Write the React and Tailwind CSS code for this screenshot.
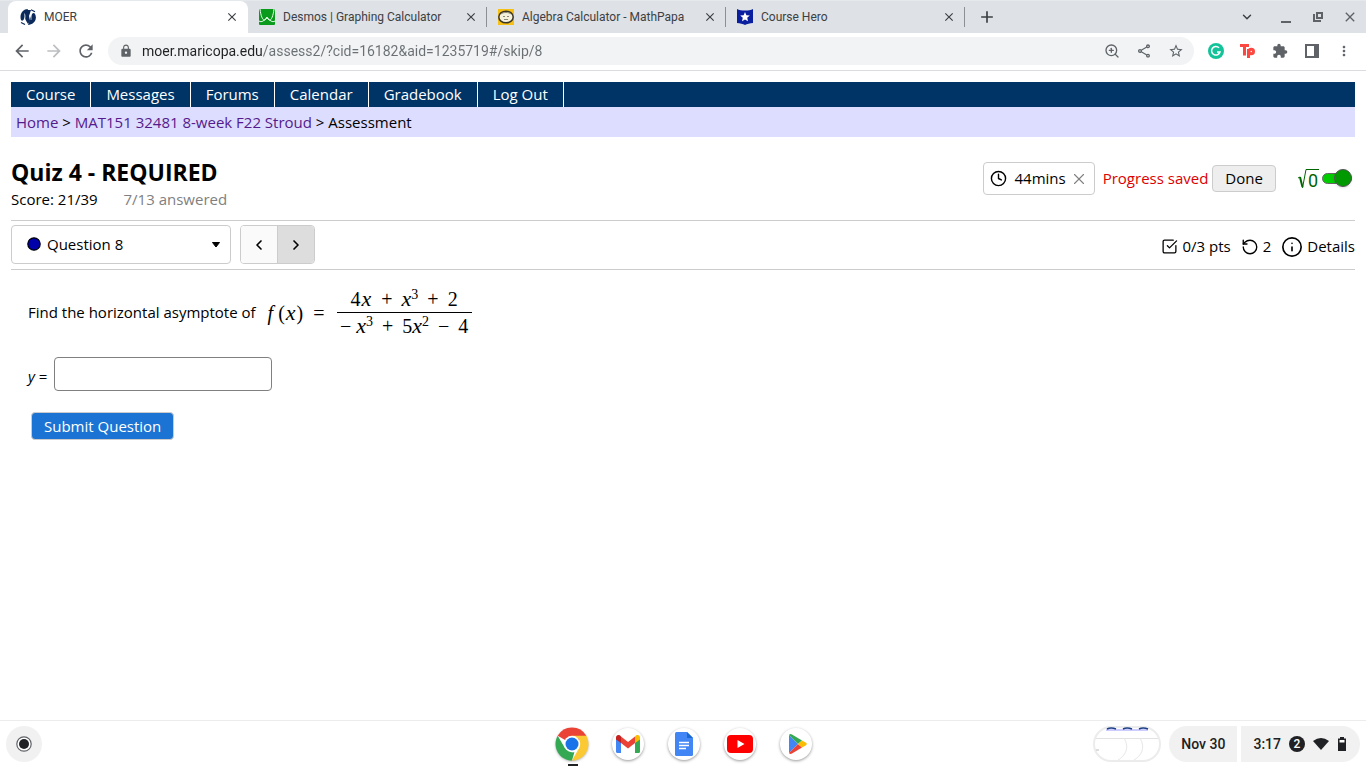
import React, { useState } from "react";
import {
  MdAdd,
  MdArrowBack,
  MdArrowForward,
  MdClose,
  MdExtension,
  MdLock,
  MdMoreVert,
  MdOutlineShare,
  MdRefresh,
  MdStarBorder,
} from "react-icons/md";
import {
  ChevronDown,
  ChevronLeft,
  ChevronRight,
  Clock,
  Info,
  RotateCcw,
  SquareCheckBig,
  X,
  ZoomIn,
} from "lucide-react";

function MoerIcon() {
  return (
    <svg viewBox="0 0 16 16" className="h-4 w-4">
      <path d="M1 11C-1 5 3 0 8 0L4 10c-1 2-2 2-3 1z" fill="#0b2a5b" />
      <path d="M6 1h5L9 7l1 5-2 3-3-5z" fill="#0b2a5b" />
      <path d="M15 5c3 6-2 11-7 11l3-9c1-3 3-4 4-2z" fill="#0b2a5b" />
      <path d="M11 .8l4 2M1 13.500l4 2" stroke="#0b2a5b" strokeWidth="1.200" />
      <path d="M4.500 4.500l.5 7M11.500 4L11 11" stroke="#fff" strokeWidth=".6" />
    </svg>
  );
}

function DesmosIcon() {
  return (
    <svg viewBox="0 0 16 16" className="h-4 w-4">
      <rect width="16" height="16" rx="1" fill="#0a9a1c" />
      <path
        d="M1 0c1 8 3 12 5 11l2-3 2 3c2 1 4-3 5-11M0 12c3 2 5-1 8-3 3 2 5 5 8 3"
        fill="none"
        stroke="#e9ffe9"
        strokeWidth="1"
      />
    </svg>
  );
}

function MathPapaIcon() {
  return (
    <svg viewBox="0 0 16 16" className="h-4 w-4">
      <rect width="16" height="16" fill="#f5c116" />
      <ellipse cx="8" cy="8" rx="7.2" ry="5.8" fill="#f4f1dc" stroke="#3a3527" strokeWidth="1.5" />
      <path d="M3 5c2-2 8-2 10 0" stroke="#8b8775" fill="none" />
      <path d="M5 7.5h2M9 7.5h2M6 10.500h4" stroke="#8b8775" fill="none" />
    </svg>
  );
}

function CourseHeroIcon() {
  return (
    <svg viewBox="0 0 16 16" className="h-4 w-4">
      <path d="M0 0c4 2 12 2 16 0v14c-3 0-6 1-8 2-2-1-5-2-8-2z" fill="#0a1fa0" />
      <path d="M8 3l1.400 3.200 3.400.3-2.600 2.300.8 3.400-3-1.800-3 1.800.8-3.400-2.600-2.300 3.400-.3z" fill="#fff" />
    </svg>
  );
}

const tabs = [
  { title: "MOER", icon: <MoerIcon />, active: true },
  { title: "Desmos | Graphing Calculator", icon: <DesmosIcon /> },
  { title: "Algebra Calculator - MathPapa", icon: <MathPapaIcon /> },
  { title: "Course Hero", icon: <CourseHeroIcon /> },
];

function TabStrip() {
  return (
    <div className="flex h-[33px] items-stretch border-t border-[#e6e9ec] bg-[#dee1e6] pl-2 text-[#3c4043]">
      {tabs.map((tab) => (
        <div
          key={tab.title}
          className={
            tab.active
              ? "flex w-60 items-center gap-2 rounded-t-lg bg-white px-3"
              : "flex w-[239px] items-center gap-2 pl-[11px]"
          }
        >
          {tab.icon}
          <span className="flex-1 truncate text-xs">{tab.title}</span>
          <button aria-label={"Close " + tab.title} className={tab.active ? "-mr-[3px]" : ""}>
            <MdClose className="h-3.5 w-3.5" />
          </button>
          {!tab.active && <span className="h-5 w-px bg-[#8c9095]" />}
        </div>
      ))}
      <button aria-label="New tab" className="ml-3">
        <MdAdd className="h-5 w-5" />
      </button>
      <div className="ml-auto flex items-center gap-4 pr-2 text-[#5f6368]">
        <button aria-label="Search tabs" className="mr-2 text-[#3c4043]">
          <ChevronDown className="h-3.5 w-3.5" strokeWidth={2.5} />
        </button>
        <button aria-label="Minimize">
          <svg viewBox="0 0 16 16" className="h-4 w-4">
            <path d="M3 13h10" stroke="currentColor" strokeWidth="2" />
          </svg>
        </button>
        <button aria-label="Restore">
          <svg viewBox="0 0 16 16" className="h-4 w-4" fill="none" stroke="currentColor">
            <path d="M7 4h5v5H7z" strokeWidth="2" />
            <path d="M4 5v7h7" strokeWidth="2" />
          </svg>
        </button>
        <button aria-label="Close window">
          <MdClose className="h-4 w-4" />
        </button>
      </div>
    </div>
  );
}

function Toolbar() {
  const [url, setUrl] = useState(
    "moer.maricopa.edu/assess2/?cid=16182&aid=1235719#/skip/8"
  );
  return (
    <div className="flex h-[38px] items-center border-b border-[#dadce0] bg-white pr-3.5 pb-px pl-3 text-[#5f6368]">
      <button aria-label="Back">
        <MdArrowBack className="h-5 w-5" />
      </button>
      <button aria-label="Forward" className="ml-3 text-[#bcbec1]">
        <MdArrowForward className="h-5 w-5" />
      </button>
      <button aria-label="Reload" className="ml-3">
        <MdRefresh className="h-5 w-5" />
      </button>
      <div className="ml-3 flex h-7 flex-1 items-center gap-4 rounded-full bg-[#f1f3f4] pr-2.5 pl-[11px]">
        <MdLock className="h-3.5 w-3.5" />
        <input
          aria-label="Address"
          value={url}
          onChange={(e) => setUrl(e.target.value)}
          className="-ml-[7px] min-w-0 flex-1 bg-[linear-gradient(90deg,#202124_121px,#6b6f73_121px)] bg-clip-text text-sm text-transparent caret-black outline-none"
        />
        <button aria-label="Zoom">
          <ZoomIn className="h-4 w-4" />
        </button>
        <button aria-label="Share">
          <MdOutlineShare className="h-4 w-4" />
        </button>
        <button aria-label="Bookmark">
          <MdStarBorder className="h-4 w-4" />
        </button>
      </div>
      <div className="ml-3.5 flex items-center gap-4">
        <button aria-label="Grammarly">
          <svg viewBox="0 0 16 16" className="h-4 w-4">
            <circle cx="8" cy="8" r="8" fill="#15c39a" />
            <path d="M11 4.800A4.300 4.300 0 1 0 12 9H9" fill="none" stroke="#fff" strokeWidth="1.500" />
          </svg>
        </button>
        <button aria-label="Teachers Pay Teachers">
          <svg viewBox="0 0 16 16" className="h-4 w-4" fill="none" stroke="#fc4840" strokeWidth="3">
            <path d="M0 2.500h9M4.500 2.500v10M8.500 6v9M9 8.500c0-3 4.500-3 4.500 0s-4.500 3-4.500 0" />
          </svg>
        </button>
        <button aria-label="Extensions">
          <MdExtension className="h-4 w-4" />
        </button>
        <button aria-label="Side panel">
          <svg viewBox="0 0 16 16" className="h-4 w-4">
            <path d="M1 1h14v14H1zM3 3v10h7V3z" fill="currentColor" fillRule="evenodd" />
          </svg>
        </button>
        <button aria-label="Menu">
          <MdMoreVert className="h-5 w-4" />
        </button>
      </div>
    </div>
  );
}

const navItems = ["Course", "Messages", "Forums", "Calendar", "Gradebook", "Log Out"];

function CourseNav() {
  return (
    <>
      <nav className="flex h-[25px] bg-[#003366] text-white">
        {navItems.map((item) => (
          <a key={item} href="#" className="border-r border-white px-[15px] leading-[25px]">
            {item}
          </a>
        ))}
      </nav>
      <div className="h-[30px] bg-[#ddddff] px-[5px] leading-[30px]">
        <a href="#" className="text-[#551a8b]">Home</a>
        {" > "}
        <a href="#" className="text-[#551a8b]">MAT151 32481 8-week F22 Stroud</a>
        {" > Assessment"}
      </div>
    </>
  );
}

function QuizHeader() {
  const [mathOn, setMathOn] = useState(true);
  return (
    <header className="mt-5 flex items-start border-b border-[#ccc] pb-[9px]">
      <div>
        <h1 className="text-[23px] leading-[30px] font-bold">Quiz 4 - REQUIRED</h1>
        <div className="leading-6">
          Score: 21/39 <span className="ml-[22px] text-[#808080]">7/13 answered</span>
        </div>
      </div>
      <div className="mt-[5px] ml-auto flex items-center">
        <div className="flex h-[33px] items-center rounded border border-[#ccc] px-1.5">
          <Clock className="h-[17px] w-[17px]" />
          <span className="ml-2">44mins</span>
          <button aria-label="Hide timer" className="ml-1 text-[#808080]">
            <X className="h-[18px] w-[18px]" strokeWidth={1.5} />
          </button>
        </div>
        <span className="ml-2 text-[#dd0000]">Progress saved</span>
        <button className="ml-1 h-[27px] rounded border border-[#ccc] bg-[#eee] px-3 leading-[25px]">
          Done
        </button>
        <label className="ml-[22px] flex items-center gap-[3px]">
          <span className="flex items-center text-[#006600]">
            <svg viewBox="0 0 9 20" className="h-5 w-[9px]" fill="none" stroke="currentColor">
              <path d="M0 9l2-1" />
              <path d="M2 8l2.500 10" strokeWidth="2" />
              <path d="M4.500 19L8 .5h1" />
            </svg>
            <span className="h-5 border-t border-[#006600] px-px font-[Roboto,sans-serif] text-lg leading-[21px]">
              0
            </span>
          </span>
          <input
            type="checkbox"
            aria-label="Math entry"
            checked={mathOn}
            onChange={(e) => setMathOn(e.target.checked)}
            className="relative mr-[3px] h-[11px] w-[30px] appearance-none rounded-full border border-[#666] bg-[#00cc00] before:absolute before:-top-[5px] before:-right-px before:h-[18px] before:w-[18px] before:rounded-full before:border before:border-[#555] before:bg-[#009900] before:shadow"
          />
        </label>
      </div>
    </header>
  );
}

function QuestionBar() {
  return (
    <div className="flex items-center border-b border-[#ccc] pt-1 pb-[5px]">
      <div className="relative">
        <select
          aria-label="Question"
          className="h-[39px] w-[220px] appearance-none rounded border border-[#ccc] bg-white pl-[35px]"
        >
          <option>Question 8</option>
        </select>
        <svg viewBox="0 0 14 14" className="pointer-events-none absolute top-3 left-4 h-3.5 w-3.5">
          <circle cx="7" cy="7" r="6.200" fill="#0000aa" stroke="#000" strokeWidth="1.200" />
        </svg>
        <svg viewBox="0 0 10 8" className="pointer-events-none absolute top-4 right-2.5 h-2 w-2.5">
          <path d="M1.500 1.500h7L5 6z" stroke="#000" strokeLinejoin="round" />
        </svg>
      </div>
      <div className="ml-[9px] flex h-[39px] overflow-hidden rounded border border-[#ccc]">
        <button aria-label="Previous question" className="w-9 bg-[#fafafa] pl-2.5">
          <ChevronLeft className="h-4 w-4" strokeWidth={2.5} />
        </button>
        <button aria-label="Next question" className="w-[37px] border-l border-[#ccc] bg-[#ddd] pl-2.5">
          <ChevronRight className="h-4 w-4" strokeWidth={2.5} />
        </button>
      </div>
      <div className="ml-auto flex items-center pt-1">
        <SquareCheckBig className="h-[17px] w-[17px]" strokeWidth={1.8} />
        <span className="ml-1">0/3 pts</span>
        <RotateCcw className="ml-2.5 h-[18px] w-[18px]" strokeWidth={1.8} />
        <span className="ml-1">2</span>
        <button className="ml-2.5 flex items-center gap-1">
          <Info className="h-[22px] w-[22px]" strokeWidth={1.8} />
          Details
        </button>
      </div>
    </div>
  );
}

function Op({ children }) {
  return <span className="mx-1">{children}</span>;
}

function Power({ n }) {
  return (
    <>
      <i className="text-[22px]">x</i>
      <sup className="text-sm">{n}</sup>
    </>
  );
}

function Formula() {
  return (
    <span className="flex items-center font-['Liberation_Serif',serif] text-xl leading-7">
      <span>
        <i>f</i> (<i className="mx-px text-[22px]">x</i>)
      </span>
      <span className="ml-2.5">=</span>
      <span className="ml-3 flex flex-col items-center">
        <span className="border-b border-black px-3.5 leading-[26px]">
          4<i className="mx-px text-[22px]">x</i> <Op>+</Op> <Power n="3" /> <Op>+</Op> 2
        </span>
        <span className="leading-[26px]">
          − <Power n="3" /> <Op>+</Op> 5<Power n="2" /> <Op>−</Op> 4
        </span>
      </span>
    </span>
  );
}

function Question() {
  const [answer, setAnswer] = useState("");
  return (
    <form className="px-[17px] pt-4" onSubmit={(e) => e.preventDefault()}>
      <div className="flex items-center gap-3">
        <span>Find the horizontal asymptote of</span>
        <Formula />
      </div>
      <div className="mt-[18px] flex items-center gap-[7px]">
        <label htmlFor="answer" className="pt-1">
          <i>y</i> =
        </label>
        <input
          id="answer"
          type="text"
          value={answer}
          onChange={(e) => setAnswer(e.target.value)}
          className="h-[34px] w-[218px] rounded border border-[#808080] px-2"
        />
      </div>
      <button className="mt-[21px] ml-[3px] h-7 rounded border border-[#ccc] bg-[#1b73d3] px-3 leading-[26px] text-white">
        Submit Question
      </button>
    </form>
  );
}

const apps = [
  {
    name: "Chrome",
    icon: (
      <svg viewBox="0 0 34 34" className="h-[34px] w-[34px]">
        <path d="M17 17L2.700 8.800A16.500 16.500 0 0 1 31.300 8.800z" fill="#ea4335" />
        <path d="M2.700 8.800l7.200 12.300 7.100 4.100 2.400.1L17 33.500A16.500 16.500 0 0 1 2.700 8.800z" fill="#34a853" />
        <path d="M31.300 8.800A16.500 16.500 0 0 1 17 33.500l7.100-12.400V12L17 8.800z" fill="#fbc934" />
        <circle cx="17" cy="17" r="8.200" fill="#fff" />
        <circle cx="17" cy="17" r="6.500" fill="#1a73e8" />
      </svg>
    ),
  },
  {
    name: "Gmail",
    icon: (
      <svg viewBox="0 0 24 18" className="h-[18px] w-6">
        <path d="M0 2v14.500Q0 18 1.500 18H5V7z" fill="#4285f4" />
        <path d="M24 2v14.500q0 1.500-1.500 1.500H19V7z" fill="#34a853" />
        <path d="M5 1.500l7 5.500 7-5.500V8l-7 5.500L5 8z" fill="#ea4335" />
        <path d="M0 2.500C0 0 3-1 5 1.500V8L0 4.500z" fill="#c5221f" />
        <path d="M24 2.500C24 0 21-1 19 1.500V8l5-3.500z" fill="#fbbc04" />
      </svg>
    ),
  },
  {
    name: "Docs",
    icon: (
      <svg viewBox="0 0 18 24" className="h-6 w-[18px]">
        <path d="M1.500 0H12l6 6v16.500q0 1.500-1.500 1.500h-15Q0 24 0 22.500v-21Q0 0 1.500 0z" fill="#4285f4" />
        <path d="M12 0l6 6h-6z" fill="#1967d2" />
        <path d="M4 10.500h10M4 13.500h10M4 16.500h7" stroke="#fff" strokeWidth="1.400" />
      </svg>
    ),
  },
  {
    name: "YouTube",
    icon: (
      <svg viewBox="0 0 26 18" className="h-[18px] w-[26px]">
        <rect width="26" height="18" rx="4" fill="#ff0000" />
        <path d="M10.500 5l7 4-7 4z" fill="#fff" />
      </svg>
    ),
  },
  {
    name: "Play Store",
    icon: (
      <svg viewBox="0 0 18 20" className="ml-1 h-5 w-[18px]">
        <path d="M0 1v18l9-9z" fill="#4285f4" />
        <path d="M0 1q1-1.500 3-.5L13 6.500 9 10z" fill="#34a853" />
        <path d="M0 19q1 1.500 3 .5l10-6L9 10z" fill="#ea4335" />
        <path d="M13 6.500l4 2.300q1.500 1.200 0 2.400l-4 2.300L9 10z" fill="#fbbc04" />
      </svg>
    ),
  },
];

function Shelf() {
  return (
    <footer className="grid h-12 grid-cols-[1fr_auto_1fr] items-center border-t border-[#ececec] bg-white px-1.5 pb-0.5 text-[#202124]">
      <button
        aria-label="Launcher"
        className="flex h-9 w-9 items-center justify-center rounded-full bg-[#f1f1f1]"
      >
        <svg viewBox="0 0 16 16" className="h-4 w-4">
          <circle cx="8" cy="8" r="7.200" fill="#fff" stroke="#5f6368" strokeWidth="1.200" />
          <circle cx="8" cy="8" r="5" fill="#202124" />
        </svg>
      </button>
      <div className="flex gap-6 pl-px">
        {apps.map((app) => (
          <button
            key={app.name}
            aria-label={app.name}
            className="relative flex h-8 w-8 items-center justify-center rounded-full bg-white shadow-[0_1px_3px_rgba(0,0,0,0.4)]"
          >
            <span className="-m-1">{app.icon}</span>
            {app.name === "Chrome" && (
              <span className="absolute top-9 left-3 h-0.5 w-2.5 bg-[#202124]" />
            )}
          </button>
        ))}
      </div>
      <div className="flex items-center justify-end text-sm font-medium">
        <button aria-label="Recent screenshots" className="mr-2">
          <svg viewBox="0 0 68 36" className="h-9 w-[68px]" fill="none">
            <rect x="1" y="1" width="66" height="34" rx="17" fill="#fff" stroke="#ececec" strokeWidth="2" />
            <path d="M13 4h42" stroke="#ccccff" strokeWidth="2" />
            <path d="M14 3q4-2 9 0M30 3q4-2 9 0M46 3q4-2 9 0" stroke="#1f3f86" strokeWidth="1.500" />
            <path d="M3 12.500h62" stroke="#e2e2e2" />
            <path d="M31 12c6 10 1 18-6 22M47 12c6 10 1 18-6 22" stroke="#e6e6e6" />
            <path d="M3 24h3" stroke="#bbb" />
          </svg>
        </button>
        <button className="mr-1 h-9 rounded-l-full rounded-r bg-[#f1f1f1] px-3">
          Nov 30
        </button>
        <button className="flex h-9 items-center gap-2 rounded-l rounded-r-full bg-[#f1f1f1] pr-[13px] pl-3">
          3:17
          <span className="h-4 w-4 rounded-full bg-[#202124] text-center text-xs leading-4 text-white">
            2
          </span>
          <svg viewBox="0 0 16 12" className="h-3 w-4">
            <path d="M0 3q8-6 16 0L8 12z" fill="#202124" />
          </svg>
          <svg viewBox="0 0 10 14" className="h-3.5 w-2.5">
            <path d="M1 1.500h2V0h4v1.500h2V14H1z" fill="#202124" />
            <path d="M2.500 3h5v2.500h-5z" fill="#fff" />
          </svg>
        </button>
      </div>
    </footer>
  );
}

function App() {
  return (
    <div className="flex min-h-screen flex-col bg-white font-[Roboto,sans-serif]">
      <TabStrip />
      <Toolbar />
      <main className="flex-1 px-[11px] pt-[11px] font-['Open_Sans',sans-serif] text-[15px] text-black">
        <CourseNav />
        <QuizHeader />
        <QuestionBar />
        <Question />
      </main>
      <Shelf />
    </div>
  );
}

export default App;
